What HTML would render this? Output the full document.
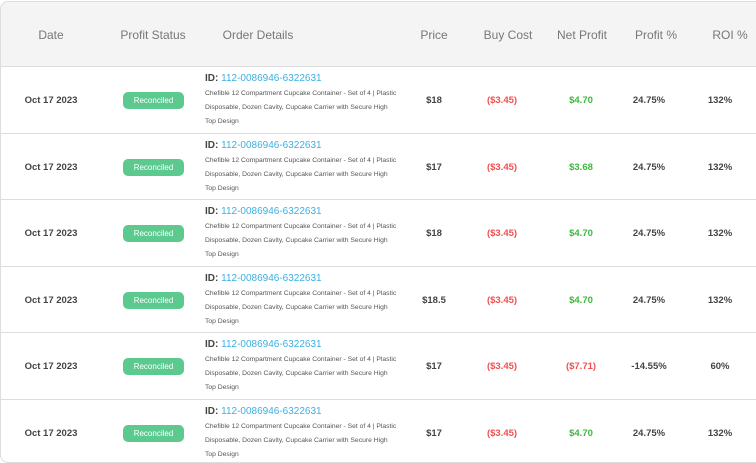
<!DOCTYPE html>
<html><head><style>
html,body{margin:0;width:756px;height:428px;overflow:hidden;background:#fff;font-family:"Liberation Sans",sans-serif;}
.card{position:absolute;left:0;top:1px;width:780px;height:460px;border:1px solid #ddd;border-radius:8px;overflow:hidden;}
.hd{position:absolute;left:0;top:0;width:100%;height:64px;background:#f4f4f4;border-bottom:1px solid #ddd;}
.h{position:absolute;top:26px;font-size:12px;color:#777;transform:translateX(-50%);white-space:nowrap}
.row{position:absolute;left:0;width:100%;height:65.5px;border-bottom:1px solid #ddd;}
.c{position:absolute;top:28px;font-size:9.5px;font-weight:bold;color:#444;transform:translateX(-50%);white-space:nowrap}
.pill{position:absolute;left:122px;top:25px;width:61px;height:17px;border-radius:5px;background:#5cc98f;color:#fff;font-size:8px;text-align:center;line-height:17px}
.od{position:absolute;left:204px;top:4px;width:194px}
.id{font-size:10px;color:#444;height:16px;line-height:16px}
.id b{font-weight:bold}
.id span{color:#3cb0e0}
.ds{font-size:6.75px;color:#555;line-height:14px}
.r{color:#f05050}.g{color:#3cb83c}
</style></head><body><div class="card">
<div class="hd">
<div class="h" style="left:50px">Date</div>
<div class="h" style="left:152px">Profit Status</div>
<div class="h" style="left:257px">Order Details</div>
<div class="h" style="left:433px">Price</div>
<div class="h" style="left:507px">Buy Cost</div>
<div class="h" style="left:581px">Net Profit</div>
<div class="h" style="left:655px">Profit %</div>
<div class="h" style="left:729px">ROI %</div>
</div>
<div class="row" style="top:65px"><div class="c" style="left:50px">Oct 17 2023</div><div class="pill">Reconciled</div><div class="od"><div class="id"><b>ID:</b> <span>112-0086946-6322631</span></div><div class="ds">Chefible 12 Compartment Cupcake Container - Set of 4 | Plastic Disposable, Dozen Cavity, Cupcake Carrier with Secure High Top Design</div></div><div class="c" style="left:433px">$18</div><div class="c r" style="left:501px">($3.45)</div><div class="c g" style="left:580px">$4.70</div><div class="c" style="left:648px">24.75%</div><div class="c" style="left:719px">132%</div></div>
<div class="row" style="top:131.5px"><div class="c" style="left:50px">Oct 17 2023</div><div class="pill">Reconciled</div><div class="od"><div class="id"><b>ID:</b> <span>112-0086946-6322631</span></div><div class="ds">Chefible 12 Compartment Cupcake Container - Set of 4 | Plastic Disposable, Dozen Cavity, Cupcake Carrier with Secure High Top Design</div></div><div class="c" style="left:433px">$17</div><div class="c r" style="left:501px">($3.45)</div><div class="c g" style="left:580px">$3.68</div><div class="c" style="left:648px">24.75%</div><div class="c" style="left:719px">132%</div></div>
<div class="row" style="top:198px"><div class="c" style="left:50px">Oct 17 2023</div><div class="pill">Reconciled</div><div class="od"><div class="id"><b>ID:</b> <span>112-0086946-6322631</span></div><div class="ds">Chefible 12 Compartment Cupcake Container - Set of 4 | Plastic Disposable, Dozen Cavity, Cupcake Carrier with Secure High Top Design</div></div><div class="c" style="left:433px">$18</div><div class="c r" style="left:501px">($3.45)</div><div class="c g" style="left:580px">$4.70</div><div class="c" style="left:648px">24.75%</div><div class="c" style="left:719px">132%</div></div>
<div class="row" style="top:264.5px"><div class="c" style="left:50px">Oct 17 2023</div><div class="pill">Reconciled</div><div class="od"><div class="id"><b>ID:</b> <span>112-0086946-6322631</span></div><div class="ds">Chefible 12 Compartment Cupcake Container - Set of 4 | Plastic Disposable, Dozen Cavity, Cupcake Carrier with Secure High Top Design</div></div><div class="c" style="left:433px">$18.5</div><div class="c r" style="left:501px">($3.45)</div><div class="c g" style="left:580px">$4.70</div><div class="c" style="left:648px">24.75%</div><div class="c" style="left:719px">132%</div></div>
<div class="row" style="top:331px"><div class="c" style="left:50px">Oct 17 2023</div><div class="pill">Reconciled</div><div class="od"><div class="id"><b>ID:</b> <span>112-0086946-6322631</span></div><div class="ds">Chefible 12 Compartment Cupcake Container - Set of 4 | Plastic Disposable, Dozen Cavity, Cupcake Carrier with Secure High Top Design</div></div><div class="c" style="left:433px">$17</div><div class="c r" style="left:501px">($3.45)</div><div class="c r" style="left:580px">($7.71)</div><div class="c" style="left:648px">-14.55%</div><div class="c" style="left:719px">60%</div></div>
<div class="row" style="top:397.5px"><div class="c" style="left:50px">Oct 17 2023</div><div class="pill">Reconciled</div><div class="od"><div class="id"><b>ID:</b> <span>112-0086946-6322631</span></div><div class="ds">Chefible 12 Compartment Cupcake Container - Set of 4 | Plastic Disposable, Dozen Cavity, Cupcake Carrier with Secure High Top Design</div></div><div class="c" style="left:433px">$17</div><div class="c r" style="left:501px">($3.45)</div><div class="c g" style="left:580px">$4.70</div><div class="c" style="left:648px">24.75%</div><div class="c" style="left:719px">132%</div></div>
</div></body></html>
